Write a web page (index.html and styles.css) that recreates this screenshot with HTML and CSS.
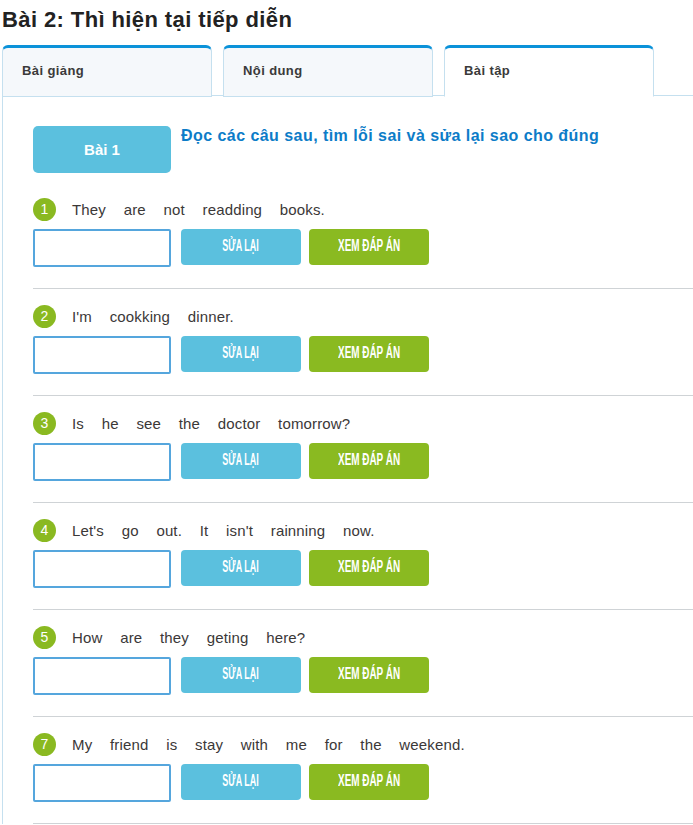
FILE: index.html
```html
<!DOCTYPE html>
<html lang="vi">
<head>
<meta charset="utf-8">
<title>Bài 2: Thì hiện tại tiếp diễn</title>
<link rel="stylesheet" href="styles.css">
</head>
<body>
<div class="page">
  <h1 class="title">Bài 2: Thì hiện tại tiếp diễn</h1>
  <div class="tabs">
    <div class="tab">Bài giảng</div>
    <div class="tab">Nội dung</div>
    <div class="tab active">Bài tập</div>
  </div>
  <div class="panel">
    <div class="exercise-head">
      <div class="ex-badge">Bài 1</div>
      <div class="ex-title">Đọc các câu sau, tìm lỗi sai và sửa lại sao cho đúng</div>
    </div>

    <div class="item">
      <div class="q-row"><span class="num">1</span><span class="q-text">They are not readding books.</span></div>
      <div class="a-row"><input class="answer" type="text"><button class="btn btn-fix"><span>SỬA LẠI</span></button><button class="btn btn-show"><span>XEM ĐÁP ÁN</span></button></div>
    </div>
    <div class="item">
      <div class="q-row"><span class="num">2</span><span class="q-text">I'm cookking dinner.</span></div>
      <div class="a-row"><input class="answer" type="text"><button class="btn btn-fix"><span>SỬA LẠI</span></button><button class="btn btn-show"><span>XEM ĐÁP ÁN</span></button></div>
    </div>
    <div class="item">
      <div class="q-row"><span class="num">3</span><span class="q-text">Is he see the doctor tomorrow?</span></div>
      <div class="a-row"><input class="answer" type="text"><button class="btn btn-fix"><span>SỬA LẠI</span></button><button class="btn btn-show"><span>XEM ĐÁP ÁN</span></button></div>
    </div>
    <div class="item">
      <div class="q-row"><span class="num">4</span><span class="q-text">Let's go out. It isn't rainning now.</span></div>
      <div class="a-row"><input class="answer" type="text"><button class="btn btn-fix"><span>SỬA LẠI</span></button><button class="btn btn-show"><span>XEM ĐÁP ÁN</span></button></div>
    </div>
    <div class="item">
      <div class="q-row"><span class="num">5</span><span class="q-text">How are they geting here?</span></div>
      <div class="a-row"><input class="answer" type="text"><button class="btn btn-fix"><span>SỬA LẠI</span></button><button class="btn btn-show"><span>XEM ĐÁP ÁN</span></button></div>
    </div>
    <div class="item">
      <div class="q-row"><span class="num">7</span><span class="q-text">My friend is stay with me for the weekend.</span></div>
      <div class="a-row"><input class="answer" type="text"><button class="btn btn-fix"><span>SỬA LẠI</span></button><button class="btn btn-show"><span>XEM ĐÁP ÁN</span></button></div>
    </div>
  </div>
</div>
</body>
</html>
```

FILE: styles.css
```css
html, body {
  margin: 0;
  padding: 0;
  background: #ffffff;
}
body {
  font-family: "Liberation Sans", Arial, sans-serif;
  color: #333333;
}
.page {
  padding-left: 2px;
}
.title {
  margin: 8px 0 13px 0;
  font-size: 22px;
  line-height: 24px;
  letter-spacing: 0.4px;
  font-weight: bold;
  color: #222222;
}
.tabs {
  display: flex;
  gap: 11px;
  height: 51px;
  position: relative;
  z-index: 1;
  margin-bottom: -1px;
}
.tab {
  box-sizing: border-box;
  width: 210px;
  height: 52px;
  padding: 0 0 3px 19px;
  display: flex;
  align-items: center;
  font-size: 13px;
  letter-spacing: 0.4px;
  font-weight: bold;
  color: #3a3a3a;
  background: #f5f8fb;
  border: 1px solid #c5e0ef;
  border-top: 3px solid #0b92d9;
  border-radius: 6px 6px 0 0;
}
.tab.active {
  background: #ffffff;
  border-bottom-color: #ffffff;
}
.panel {
  border-top: 1px solid #c5e0ef;
  border-left: 1px solid #c5e0ef;
  padding: 30px 0 0 30px;
}
.exercise-head {
  display: flex;
  align-items: flex-start;
  gap: 10px;
  margin-bottom: 9px;
}
.ex-badge {
  width: 138px;
  height: 47px;
  border-radius: 5px;
  background: #5bc0de;
  color: #ffffff;
  font-size: 15px;
  font-weight: bold;
  display: flex;
  align-items: center;
  justify-content: center;
}
.ex-title {
  font-size: 16px;
  letter-spacing: 0.45px;
  line-height: 20px;
  font-weight: bold;
  color: #0c7cc8;
}
.item {
  padding: 16px 0 21px 0;
  border-bottom: 1px solid #cfd3d6;
}
.q-row {
  display: flex;
  align-items: center;
  height: 22px;
}
.num {
  width: 23px;
  height: 23px;
  border-radius: 50%;
  background: #8ab921;
  color: #ffffff;
  font-size: 14px;
  display: flex;
  align-items: center;
  justify-content: center;
  flex-shrink: 0;
}
.q-text {
  margin-left: 16px;
  font-size: 15px;
  letter-spacing: 0.15px;
  word-spacing: 13.4px;
  color: #3b3838;
}
.a-row {
  display: flex;
  align-items: flex-start;
  margin-top: 9px;
  height: 38px;
}
.answer {
  box-sizing: border-box;
  width: 138px;
  height: 38px;
  margin: 0 10px 0 0;
  border: 2px solid #55a6dd;
  border-radius: 2px;
  background: #ffffff;
  padding: 0 6px;
  outline: none;
}
.btn {
  box-sizing: border-box;
  width: 120px;
  height: 36px;
  border: none;
  border-radius: 4px;
  padding: 0 0 2px 0;
  color: #ffffff;
  font-family: "Liberation Sans", Arial, sans-serif;
  font-weight: bold;
  font-size: 16px;
  display: flex;
  align-items: center;
  justify-content: center;
  overflow: hidden;
}
.btn span {
  display: inline-block;
  white-space: nowrap;
}
.btn-fix {
  background: #5bc0de;
  margin-right: 8px;
}
.btn-fix span {
  transform: scaleX(0.56);
}
.btn-show {
  background: #8aba21;
}
.btn-show span {
  transform: scaleX(0.62);
}
```
